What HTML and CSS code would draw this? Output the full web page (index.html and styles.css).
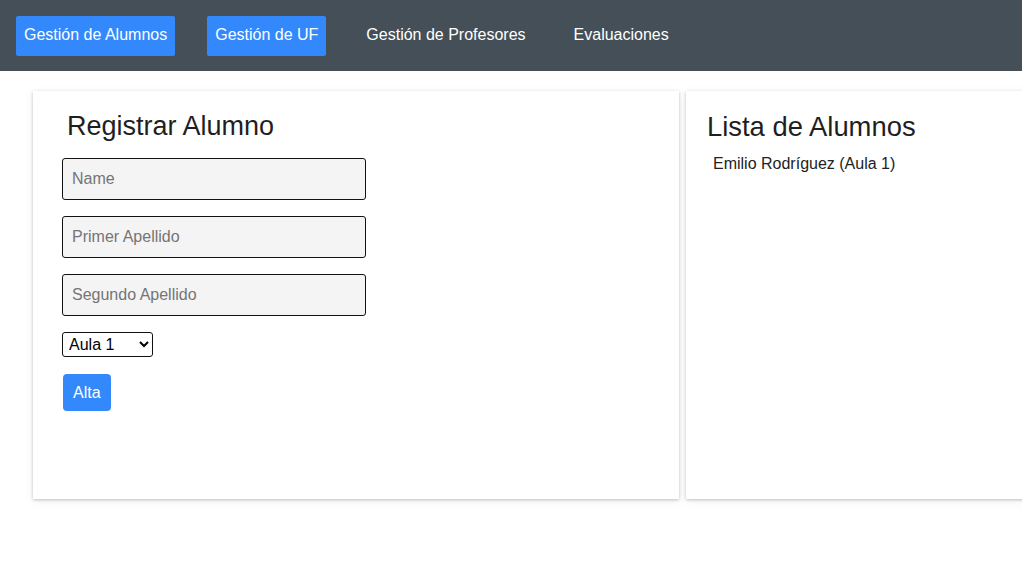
FILE: index.html
```html
<!DOCTYPE html>
<html lang="es">
<head>
<meta charset="utf-8">
<title>Gestión de Alumnos</title>
<link rel="stylesheet" href="styles.css">
</head>
<body>
<nav class="nav">
  <a class="nav-link active" href="#">Gestión de Alumnos</a>
  <a class="nav-link active" href="#">Gestión de UF</a>
  <a class="nav-link" href="#">Gestión de Profesores</a>
  <a class="nav-link" href="#">Evaluaciones</a>
</nav>
<main class="main">
  <section class="card card-form">
    <h2 class="card-title">Registrar Alumno</h2>
    <form class="form">
      <input class="field" type="text" placeholder="Name">
      <input class="field" type="text" placeholder="Primer Apellido">
      <input class="field" type="text" placeholder="Segundo Apellido">
      <select class="select">
        <option>Aula 1</option>
        <option>Aula 2</option>
      </select>
      <button class="btn" type="button">Alta</button>
    </form>
  </section>
  <section class="card card-list">
    <h2 class="card-title list-title">Lista de Alumnos</h2>
    <ul class="list">
      <li>Emilio Rodríguez (Aula 1)</li>
    </ul>
  </section>
</main>
</body>
</html>
```

FILE: styles.css
```css
html {
  overflow-x: hidden;
}

body {
  margin: 0;
  padding: 0;
  background: #fff;
  font-family: "Liberation Sans", Arial, sans-serif;
  color: #222;
}

.nav {
  height: 71px;
  background: #444f57;
  display: flex;
  align-items: center;
  gap: 32px;
  padding: 0 16px;
}

.nav-link {
  display: block;
  height: 40px;
  line-height: 38px;
  padding: 0 8px;
  color: #fff;
  text-decoration: none;
  font-size: 16px;
  border-radius: 2px;
}

.nav-link.active {
  background: #3388fc;
}

.main {
  display: flex;
  gap: 7px;
  padding: 20px 0 30px 33px;
  width: max-content;
}

.card {
  flex-shrink: 0;
  width: 646px;
  height: 408px;
  box-sizing: border-box;
  background: #fff;
  box-shadow: 0 1px 3px rgba(0, 0, 0, 0.22), 0 2px 10px rgba(0, 0, 0, 0.06);
}

.card-form {
  padding: 20px 29px 0;
}

.card-list {
  padding: 21px 21px 0;
}

.card-title {
  margin: 0;
  font-size: 27px;
  font-weight: normal;
  line-height: 30px;
  color: #1f1f1f;
}

.card-form .card-title {
  padding-left: 5px;
}

.list-title {
  font-size: 27.4px;
}

.form {
  display: flex;
  flex-direction: column;
  align-items: flex-start;
  gap: 16px;
  margin-top: 17px;
}

.field {
  width: 304px;
  height: 42px;
  box-sizing: border-box;
  border: 1px solid #111;
  border-radius: 3px;
  background: #f4f4f4;
  padding: 0 9px;
  font-family: inherit;
  font-size: 16px;
  color: #222;
}

.field::placeholder {
  color: #757575;
}

.select {
  width: 91px;
  height: 25px;
  box-sizing: border-box;
  border: 1px solid #111;
  border-radius: 3px;
  background: #fff;
  font-family: inherit;
  font-size: 16px;
  color: #000;
  padding: 0 2px;
}

.btn {
  margin-top: 1px;
  margin-left: 1px;
  height: 37px;
  padding: 0 10px;
  border: none;
  border-radius: 4px;
  background: #3388fc;
  color: #fff;
  font-family: inherit;
  font-size: 16px;
}

.list {
  list-style: none;
  margin: 13px 0 0;
  padding: 0 0 0 6px;
  font-size: 16px;
  color: #222;
}
```
